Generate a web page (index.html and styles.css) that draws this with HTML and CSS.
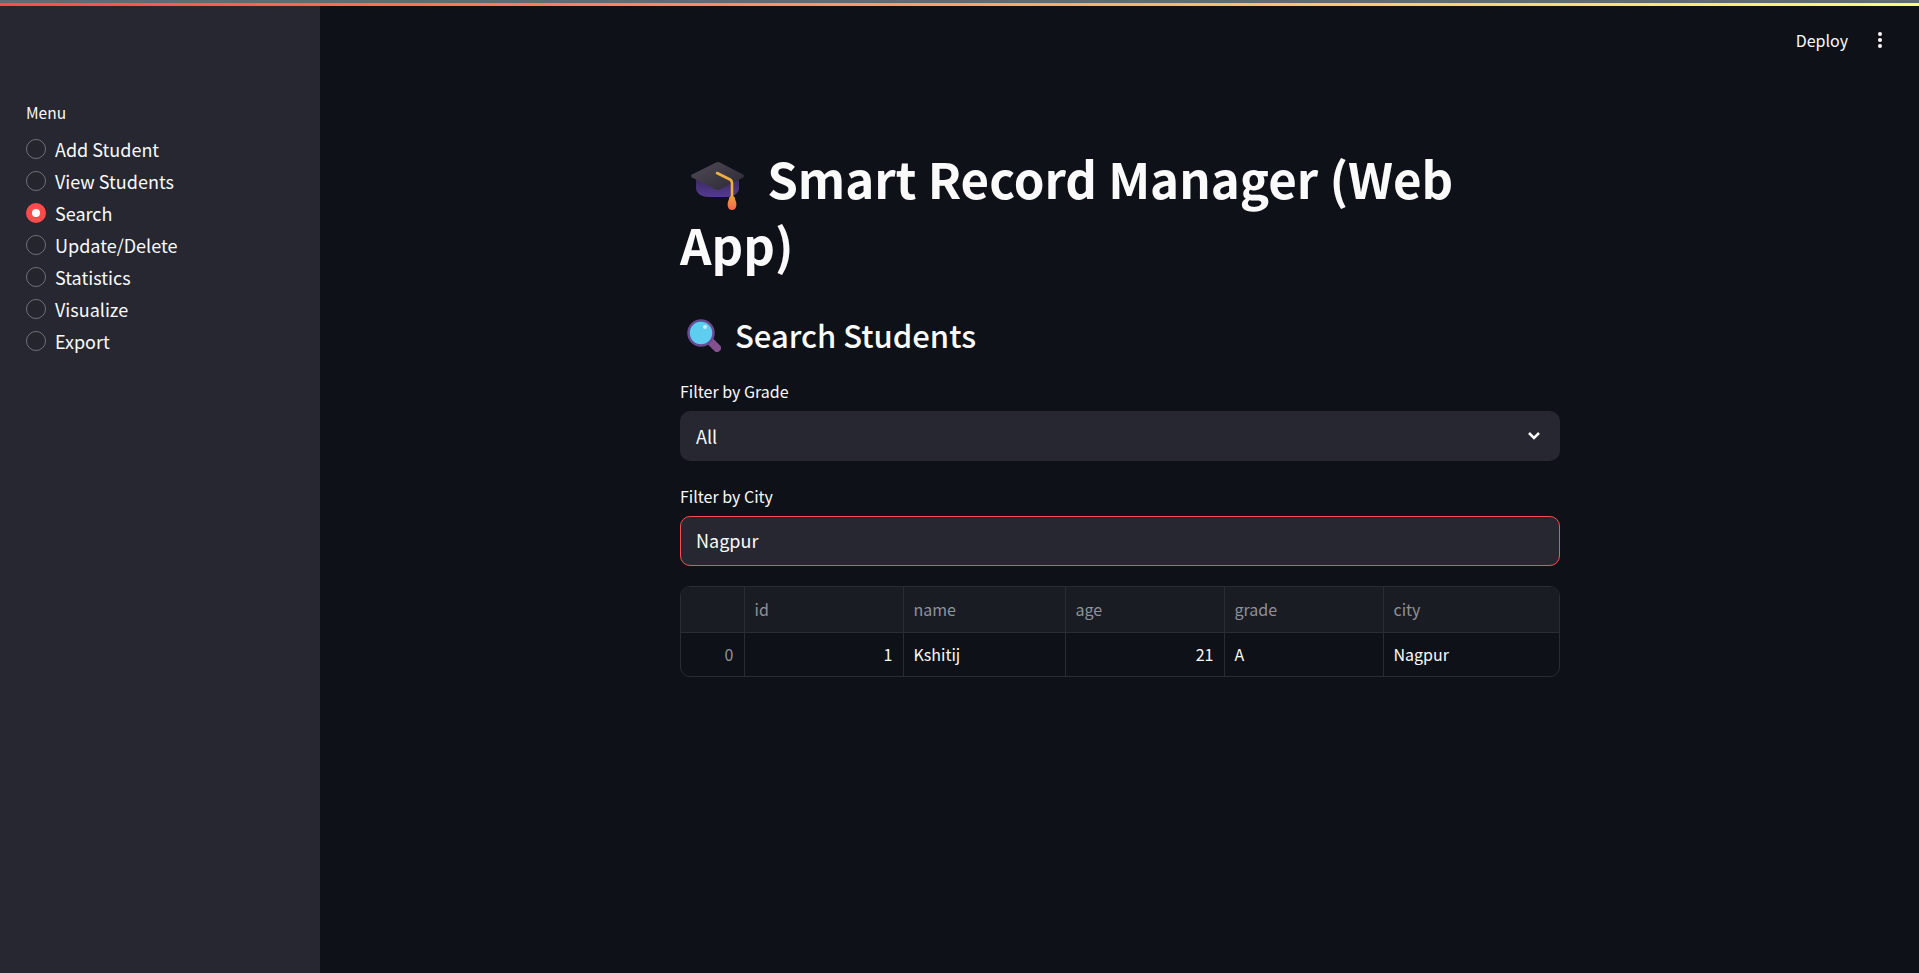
FILE: index.html
```html
<!DOCTYPE html>
<html lang="en">
<head>
  <meta charset="utf-8">
  <title>Smart Record Manager</title>
  <link rel="stylesheet" href="styles.css">
</head>
<body>
  <div class="top-line"></div>
  <div class="app">
    <aside class="sidebar">
      <p class="menu-label">Menu</p>
      <ul class="radio-list">
        <li><span class="radio"></span>Add Student</li>
        <li><span class="radio"></span>View Students</li>
        <li><span class="radio on"></span>Search</li>
        <li><span class="radio"></span>Update/Delete</li>
        <li><span class="radio"></span>Statistics</li>
        <li><span class="radio"></span>Visualize</li>
        <li><span class="radio"></span>Export</li>
      </ul>
    </aside>
    <main class="main">
      <header class="toolbar">
        <span class="deploy">Deploy</span>
        <svg class="kebab" viewBox="0 0 6 18" width="6" height="18"><circle cx="3" cy="3" r="2" /><circle cx="3" cy="9" r="2" /><circle cx="3" cy="15" r="2" /></svg>
      </header>
      <div class="content">
        <h1>
          <svg class="emoji cap" viewBox="0 0 56 50" width="56" height="50">
            <defs>
              <linearGradient id="capTop" x1="0" y1="0" x2="1" y2="1">
                <stop offset="0" stop-color="#4f4a57" />
                <stop offset="1" stop-color="#2c2933" />
              </linearGradient>
              <linearGradient id="capBody" x1="0" y1="0" x2="0" y2="1">
                <stop offset="0" stop-color="#3a2a63" />
                <stop offset="1" stop-color="#553a92" />
              </linearGradient>
              <linearGradient id="tassel" x1="0" y1="0" x2="0" y2="1">
                <stop offset="0" stop-color="#f2a13c" />
                <stop offset="1" stop-color="#f0654f" />
              </linearGradient>
            </defs>
            <path d="M6 18 6 28C7 33 12 36 19 36H36C43 36 48 33 49 28V18Z" fill="url(#capBody)" />
            <path d="M26 1.500Q28 .5 30 1.500L53 13.500Q55 15 53 16.500L30 28.500Q28 29.500 26 28.500L2 16.500Q0 15 2 13.500Z" fill="url(#capTop)" />
            <path d="M27 12 40 18.500Q42 19.500 42 22V36" fill="none" stroke="#efb03f" stroke-width="2.600" stroke-linecap="round" />
            <path d="M42 35c-2 0-3 1-3 3-1 3-2 5-1 8 .5 2 2 3 4 3s3.500-1 4-3c1-3 0-5-1-8 0-2-1-3-3-3z" fill="url(#tassel)" />
          </svg>
          Smart Record Manager (Web App)
        </h1>
        <h2>
          <svg class="emoji glass" viewBox="0 0 36 36" width="36" height="36">
            <path d="M25 25 32 32" stroke="#84508f" stroke-width="8" stroke-linecap="round" />
            <circle cx="16" cy="17" r="12.500" fill="#5fcdf0" stroke="#6a4a92" stroke-width="2.500" />
            <circle cx="20" cy="11" r="2" fill="#c4eefa" />
          </svg>
          Search Students
        </h2>
        <label class="field-label">Filter by Grade</label>
        <div class="select">
          <span>All</span>
          <svg class="chevron" viewBox="0 0 14 9" width="14" height="9"><path d="M2 2l5 5 5-5" fill="none" stroke="#fafafa" stroke-width="2.500" /></svg>
        </div>
        <label class="field-label second">Filter by City</label>
        <input class="text-input" type="text" value="Nagpur">
        <div class="table-wrap">
          <table class="frame">
            <colgroup>
              <col class="c-index"><col class="c-id"><col class="c-name"><col class="c-age"><col class="c-grade"><col class="c-city">
            </colgroup>
            <thead>
              <tr><th></th><th>id</th><th>name</th><th>age</th><th>grade</th><th>city</th></tr>
            </thead>
            <tbody>
              <tr><td class="num idx">0</td><td class="num">1</td><td>Kshitij</td><td class="num">21</td><td>A</td><td>Nagpur</td></tr>
            </tbody>
          </table>
        </div>
      </div>
    </main>
  </div>
</body>
</html>
```

FILE: styles.css
```css
* {
  box-sizing: border-box;
}
html, body {
  height: 100%;
  margin: 0;
}
body {
  background: #0e1117;
  color: #fafafa;
  font-family: "Noto Sans CJK SC", "Open Sans", sans-serif;
  overflow: hidden;
}
.top-line {
  height: 6px;
  border-top: 3px solid #5f6b70;
  background: linear-gradient(90deg, #ff4b4b, #fffd80);
}
.app {
  display: flex;
  height: calc(100% - 6px);
}
.sidebar {
  width: 320px;
  background: #262730;
  padding: 94px 26px 0;
}
.menu-label {
  margin: 0 0 9px;
  font-size: 15.500px;
  line-height: 24px;
}
.radio-list {
  list-style: none;
  margin: 0;
  padding: 0;
}
.radio-list li {
  display: flex;
  align-items: center;
  gap: 9px;
  height: 32px;
  font-size: 18px;
}
.radio {
  width: 20px;
  height: 20px;
  border: 1px solid #6f7078;
  border-radius: 50%;
  background: #24252d;
}
.radio.on {
  border: 6px solid #ff4b4b;
  background: #fff;
}
.main {
  flex: 1;
}
.toolbar {
  display: flex;
  justify-content: flex-end;
  align-items: center;
  gap: 29px;
  height: 70px;
  padding: 0 36px 2px 0;
  font-size: 16px;
}
.kebab {
  fill: #fafafa;
}
.content {
  width: 880px;
  margin-left: 360px;
}
h1 {
  margin: 69px 0 0;
  font-size: 49.200px;
  line-height: 66px;
  font-weight: 700;
}
.emoji {
  vertical-align: middle;
}
.cap {
  margin: 0 10px 0 10px;
}
.glass {
  margin: 0 7px 0 5px;
  vertical-align: -4px;
}
h2 {
  height: 44px;
  margin: 36px 0 0;
  font-size: 31px;
  line-height: 44px;
  font-weight: 500;
}
.field-label {
  display: block;
  margin-top: 22px;
  font-size: 16px;
  line-height: 24px;
}
.field-label.second {
  margin-top: 23px;
}
.select, .text-input {
  display: flex;
  align-items: center;
  justify-content: space-between;
  width: 100%;
  height: 50px;
  margin-top: 8px;
  padding: 0 19px 1px 16px;
  background: #262730;
  border-radius: 10px;
  color: #fafafa;
  font-size: 18px;
}
.text-input {
  border: 1px solid #ff4b4b;
  padding: 0 15px 2px;
  font-family: inherit;
  outline: none;
}
.table-wrap {
  margin-top: 20px;
  border: 1px solid #2a2c33;
  border-radius: 10px;
  overflow: hidden;
}
.frame {
  width: 100%;
  border-collapse: collapse;
  table-layout: fixed;
  font-size: 16px;
}
.c-index { width: 63px; }
.c-id { width: 159px; }
.c-name { width: 162px; }
.c-age { width: 159px; }
.c-grade { width: 159px; }
.frame th, .frame td {
  border: 1px solid #2a2c33;
  padding: 0 10px;
  text-align: left;
  font-weight: 400;
}
.frame tr > :first-child { border-left: 0; }
.frame tr > :last-child { border-right: 0; }
.frame thead th { border-top: 0; }
.frame tbody td { border-bottom: 0; }
.frame th {
  height: 45px;
  background: #1a1c24;
  color: #8f9198;
}
.frame td {
  height: 44px;
}
.frame td.num {
  text-align: right;
}
.frame td.idx {
  color: #8f9198;
}
```
